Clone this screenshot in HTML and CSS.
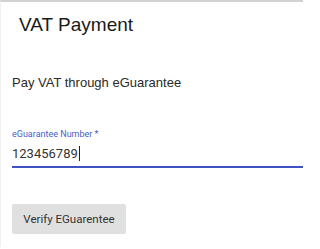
FILE: index.html
```html
<!DOCTYPE html>
<html>
<head>
<meta charset="utf-8">
<link rel="stylesheet" href="styles.css">
</head>
<body>
<div class="card">
  <h1 class="title">VAT Payment</h1>
  <p class="intro">Pay VAT through eGuarantee</p>
  <div class="field">
    <label class="field-label">eGuarantee Number *</label>
    <div class="field-value">123456789<span class="caret"></span></div>
  </div>
  <button class="btn">Verify EGuarentee</button>
</div>
</body>
</html>
```
FILE: styles.css
```css
html, body {
  margin: 0;
  padding: 0;
  background: #fff;
}
body {
  width: 303px;
  height: 249px;
  overflow: hidden;
}
.card {
  border-top: 2px solid #d2d2d2;
  border-left: 1px solid #f1f1f1;
  height: 247px;
  padding-left: 11px;
  box-sizing: border-box;
}
.title {
  margin: 0;
  padding: 12px 0 0 7px;
  font-family: "Liberation Sans", Arial, sans-serif;
  font-weight: normal;
  font-size: 19px;
  line-height: 22px;
  color: #1a1a1a;
}
.intro {
  margin: 0;
  padding-top: 39px;
  font-family: "Liberation Sans", Arial, sans-serif;
  font-size: 13px;
  line-height: 16px;
  color: #2a2a2a;
}
.field {
  margin-top: 38px;
  border-bottom: 2px solid #3f51c5;
  padding-bottom: 5px;
}
.field-label {
  display: block;
  font-family: Roboto, sans-serif;
  font-size: 9px;
  line-height: 11px;
  color: #4a5ccf;
}
.field-value {
  margin-top: 6px;
  font-family: Roboto, sans-serif;
  font-size: 13px;
  line-height: 15px;
  color: #333;
  display: flex;
  align-items: center;
}
.caret {
  display: inline-block;
  width: 1px;
  height: 15px;
  background: #222;
  margin-left: 1px;
}
.btn {
  display: block;
  margin-top: 36px;
  width: 114px;
  height: 30px;
  border: none;
  border-radius: 2px;
  background: #e0e0e0;
  font-family: Roboto, sans-serif;
  font-size: 11.5px;
  color: #333;
  padding: 0;
}
```
